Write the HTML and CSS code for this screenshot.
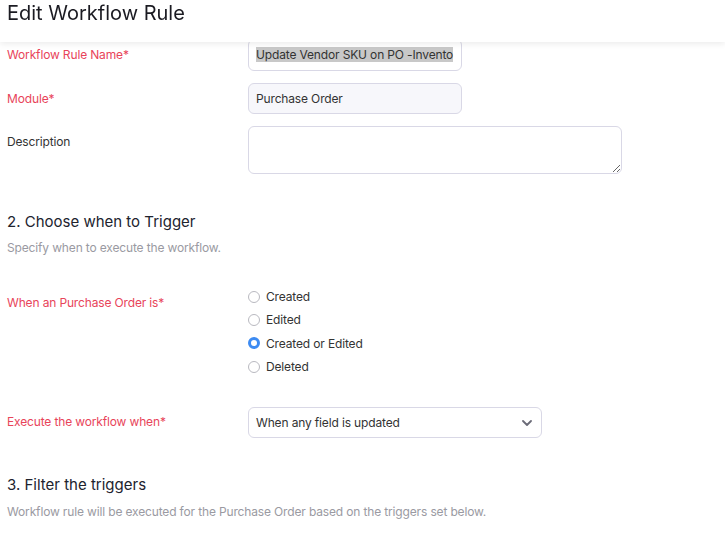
FILE: index.html
```html
<!DOCTYPE html>
<html>
<head>
<meta charset="utf-8">
<link rel="stylesheet" href="styles.css">
</head>
<body>
<header class="page-header">
  <h1 class="page-title">Edit Workflow Rule</h1>
</header>
<main class="content">
  <div class="form-row">
    <label class="field-label required">Workflow Rule Name*</label>
    <div class="text-input"><span class="selected">Update Vendor SKU on PO -Invento</span></div>
  </div>
  <div class="form-row">
    <label class="field-label required">Module*</label>
    <div class="text-input disabled">Purchase Order</div>
  </div>
  <div class="form-row">
    <label class="field-label">Description</label>
    <textarea class="text-area"></textarea>
  </div>

  <section class="section">
    <h2 class="section-title">2. Choose when to Trigger</h2>
    <p class="section-sub">Specify when to execute the workflow.</p>
  </section>

  <div class="form-row radio-row">
    <label class="field-label required">When an Purchase Order is*</label>
    <div class="radio-group">
      <div class="radio"><span class="radio-dot"></span>Created</div>
      <div class="radio"><span class="radio-dot"></span>Edited</div>
      <div class="radio"><span class="radio-dot checked"></span>Created or Edited</div>
      <div class="radio"><span class="radio-dot"></span>Deleted</div>
    </div>
  </div>

  <div class="form-row select-row">
    <label class="field-label required">Execute the workflow when*</label>
    <div class="select">
      <span>When any field is updated</span>
      <svg class="chevron" width="10" height="6" viewBox="0 0 10 6"><path d="M1 1 L5 5 L9 1" fill="none" stroke="#6b6b78" stroke-width="1.8" stroke-linecap="round" stroke-linejoin="round"/></svg>
    </div>
  </div>

  <section class="section section-3">
    <h2 class="section-title">3. Filter the triggers</h2>
    <p class="section-sub">Workflow rule will be executed for the Purchase Order based on the triggers set below.</p>
  </section>
</main>
</body>
</html>
```
FILE: styles.css
```css
* { box-sizing: border-box; }
html, body { margin: 0; padding: 0; background: #fff; }
body {
  font-family: Inter, "Noto Sans", sans-serif;
  font-size: 12px;
  letter-spacing: -0.15px;
  color: #21263c;
  width: 725px;
  height: 533px;
  overflow: hidden;
}
.page-header {
  position: fixed;
  top: 0; left: 0; right: 0;
  height: 42px;
  background: #fff;
  box-shadow: 0 2px 6px rgba(0,0,0,0.08);
  z-index: 10;
  padding-left: 7px;
}
.page-title {
  margin: 0;
  font-size: 20px;
  font-weight: 400;
  line-height: 26px;
  letter-spacing: 0;
  color: #1b1b22;
}
.content {
  padding: 39px 0 0 7px;
}
.form-row {
  display: grid;
  grid-template-columns: 241px 1fr;
  align-items: start;
  margin-bottom: 12px;
}
.field-label {
  padding-top: 8px;
  line-height: 16px;
  color: #333;
}
.field-label.required { color: #e8445a; }
.text-input {
  width: 214px;
  height: 32px;
  border: 1px solid #d9d8e6;
  border-radius: 6px;
  padding: 0 7px;
  line-height: 30px;
  white-space: nowrap;
  overflow: hidden;
  color: #333;
}
.text-input.disabled {
  height: 31px;
  line-height: 29px;
  background: #f7f7fb;
}
.selected { background: #c8c8c8; }
.text-area {
  display: block;
  width: 374px;
  height: 48px;
  border: 1px solid #d9d8e6;
  border-radius: 6px;
  margin: 0;
  resize: both;
  font-family: inherit;
}
.section { margin-top: 38px; }
.section-title {
  margin: 0;
  font-size: 15px;
  font-weight: 400;
  line-height: 20px;
  letter-spacing: 0;
  color: #21232e;
}
.section-sub {
  margin: 8px 0 0;
  line-height: 16px;
  color: #9a9aa2;
}
.radio-row { margin-top: 29px; margin-bottom: 29px; }
.radio-row .field-label { padding-top: 10px; }
.radio-group { display: flex; flex-direction: column; }
.radio {
  display: flex;
  align-items: center;
  height: 23.3px;
  color: #333;
}
.radio-dot {
  width: 12px;
  height: 12px;
  border: 1px solid #b9b9c0;
  border-radius: 50%;
  margin-right: 6px;
  background: #fff;
}
.radio-dot.checked {
  border: 3.5px solid #3d8bf2;
}
.select-row { margin-bottom: 0; }
.select-row .field-label { padding-top: 7px; }
.select {
  width: 294px;
  height: 31px;
  border: 1px solid #d9d8e6;
  border-radius: 6px;
  padding: 0 9px 0 7px;
  display: flex;
  align-items: center;
  justify-content: space-between;
  color: #333;
}
.section-3 { margin-top: 37px; }
.section-3 .section-sub { margin-top: 9px; }
```
